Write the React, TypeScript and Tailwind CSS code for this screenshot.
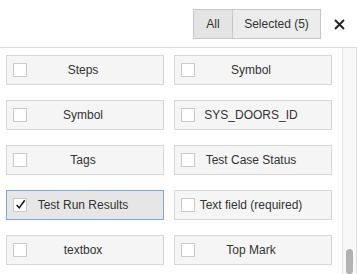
import React from 'react';

const fields = [
  { label: 'Steps', checked: false },
  { label: 'Symbol', checked: false },
  { label: 'Symbol', checked: false },
  { label: 'SYS_DOORS_ID', checked: false },
  { label: 'Tags', checked: false },
  { label: 'Test Case Status', checked: false },
  { label: 'Test Run Results', checked: true },
  { label: 'Text field (required)', checked: false },
  { label: 'textbox', checked: false },
  { label: 'Top Mark', checked: false },
];

function FieldCard({ label, checked }: { label: string; checked: boolean }) {
  return (
    <div
      className={`relative flex h-[30px] items-center border pl-[6px] ${
        checked ? 'border-[#7ea8dc] bg-[#e6e6e6]' : 'border-[#d6d6d6] bg-[#f5f5f5]'
      }`}
    >
      <span className="flex h-[14px] w-[14px] shrink-0 items-center justify-center border border-[#c9c9c9] bg-white">
        {checked && (
          <svg width="13" height="13" viewBox="0 0 13 13" className="-mt-[2px] ml-[1px]">
            <path d="M2 7 L5 10.5 L11.5 1.5" fill="none" stroke="#111" strokeWidth="1.8" />
          </svg>
        )}
      </span>
      <span className="flex-1 truncate whitespace-nowrap pr-[24px] text-center text-[12px] text-[#333]">{label}</span>
    </div>
  );
}

export default function App() {
  return (
    <div className="flex h-[274px] w-[357px] flex-col overflow-hidden bg-white font-['Liberation_Sans',Arial,sans-serif]">
      {/* header */}
      <div className="flex h-[48px] shrink-0 items-start border-b border-[#dedede] pt-[9px]">
        <div className="ml-[193px] flex h-[30px] border border-[#c6c6c6] text-[12px] text-[#333]">
          <button className="w-[39px] border-r border-[#c6c6c6] bg-[#e4e4e4]">All</button>
          <button className="w-[87px] bg-[#ececec]">Selected (5)</button>
        </div>
        <button className="ml-[12px] mt-[9px] flex h-[12px] w-[12px] items-center justify-center">
          <svg width="11" height="11" viewBox="0 0 11 11">
            <path d="M1 1 L10 10 M10 1 L1 10" stroke="#222" strokeWidth="1.9" />
          </svg>
        </button>
      </div>

      {/* body */}
      <div className="flex min-h-0 flex-1">
        <div className="flex-1 overflow-hidden pl-[6px] pr-[10px] pt-[7px]">
          <div className="grid grid-cols-2 gap-x-[10px] gap-y-[15px]">
            {fields.map((f, i) => (
              <FieldCard key={i} label={f.label} checked={f.checked} />
            ))}
          </div>
        </div>
        {/* scrollbar */}
        <div className="flex w-[15px] shrink-0 flex-col border-x border-[#e2e2e2] bg-[#f8f8f8]">
          <div className="ml-[3px] mt-[201px] h-[40px] w-[7px] rounded-full bg-[#b3b3b3]" />
        </div>
      </div>
    </div>
  );
}
